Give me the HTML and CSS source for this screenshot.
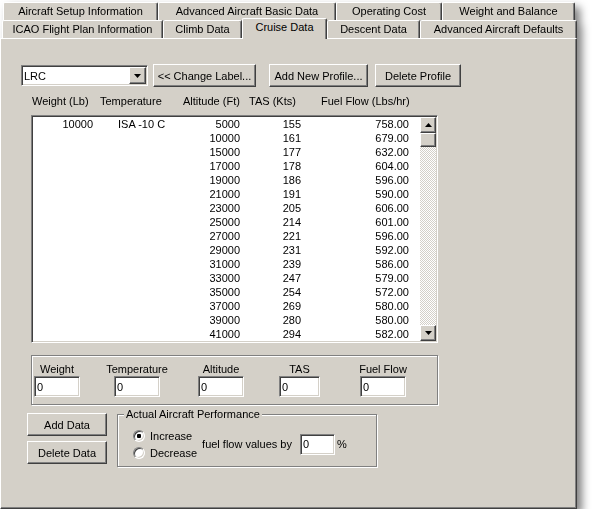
FILE: index.html
```html
<!DOCTYPE html>
<html>
<head>
	<title>
		Cruise Data
	</title>

	<link rel="stylesheet" href="styles.css">
</head>
<body>
	<div class="dialog">
		<div class="tabs">
			<div class="tab-row back">
				<div class="tab t-setup">Aircraft Setup Information</div>
				<div class="tab t-basic">Advanced Aircraft Basic Data</div>
				<div class="tab t-cost">Operating Cost</div>
				<div class="tab t-weight">Weight and Balance</div>
			</div>
			<div class="tab-row front">
				<div class="tab t-icao">ICAO Flight Plan Information</div>
				<div class="tab t-climb">Climb Data</div>
				<div class="tab t-cruise active">Cruise Data</div>
				<div class="tab t-descent">Descent Data</div>
				<div class="tab t-defaults">Advanced Aircraft Defaults</div>
			</div>
		</div>

		<div class="panel">
			<div class="toolbar">
				<div class="combo">
					<span class="combo-text">LRC</span>
					<span class="combo-btn raised">
						<svg width="7" height="4" viewBox="0 0 7 4"><polygon points="0,0 7,0 3.5,4" fill="#000"/></svg>
					</span>
				</div>
				<button class="btn btn-label">&lt;&lt; Change Label...</button>
				<button class="btn btn-add">Add New Profile...</button>
				<button class="btn btn-delete">Delete Profile</button>
			</div>

			<div class="list-head">
				<span>Weight (Lb)</span>
				<span>Temperature</span>
				<span>Altitude (Ft)</span>
				<span>TAS (Kts)</span>
				<span>Fuel Flow (Lbs/hr)</span>
			</div>

			<div class="listbox">
				<div class="rows">
					<div class="row"><span class="c-weight">10000</span><span class="c-temp">ISA -10 C</span><span class="c-alt">5000</span><span class="c-tas">155</span><span class="c-fuel">758.00</span></div>
					<div class="row"><span class="c-weight"></span><span class="c-temp"></span><span class="c-alt">10000</span><span class="c-tas">161</span><span class="c-fuel">679.00</span></div>
					<div class="row"><span class="c-weight"></span><span class="c-temp"></span><span class="c-alt">15000</span><span class="c-tas">177</span><span class="c-fuel">632.00</span></div>
					<div class="row"><span class="c-weight"></span><span class="c-temp"></span><span class="c-alt">17000</span><span class="c-tas">178</span><span class="c-fuel">604.00</span></div>
					<div class="row"><span class="c-weight"></span><span class="c-temp"></span><span class="c-alt">19000</span><span class="c-tas">186</span><span class="c-fuel">596.00</span></div>
					<div class="row"><span class="c-weight"></span><span class="c-temp"></span><span class="c-alt">21000</span><span class="c-tas">191</span><span class="c-fuel">590.00</span></div>
					<div class="row"><span class="c-weight"></span><span class="c-temp"></span><span class="c-alt">23000</span><span class="c-tas">205</span><span class="c-fuel">606.00</span></div>
					<div class="row"><span class="c-weight"></span><span class="c-temp"></span><span class="c-alt">25000</span><span class="c-tas">214</span><span class="c-fuel">601.00</span></div>
					<div class="row"><span class="c-weight"></span><span class="c-temp"></span><span class="c-alt">27000</span><span class="c-tas">221</span><span class="c-fuel">596.00</span></div>
					<div class="row"><span class="c-weight"></span><span class="c-temp"></span><span class="c-alt">29000</span><span class="c-tas">231</span><span class="c-fuel">592.00</span></div>
					<div class="row"><span class="c-weight"></span><span class="c-temp"></span><span class="c-alt">31000</span><span class="c-tas">239</span><span class="c-fuel">586.00</span></div>
					<div class="row"><span class="c-weight"></span><span class="c-temp"></span><span class="c-alt">33000</span><span class="c-tas">247</span><span class="c-fuel">579.00</span></div>
					<div class="row"><span class="c-weight"></span><span class="c-temp"></span><span class="c-alt">35000</span><span class="c-tas">254</span><span class="c-fuel">572.00</span></div>
					<div class="row"><span class="c-weight"></span><span class="c-temp"></span><span class="c-alt">37000</span><span class="c-tas">269</span><span class="c-fuel">580.00</span></div>
					<div class="row"><span class="c-weight"></span><span class="c-temp"></span><span class="c-alt">39000</span><span class="c-tas">280</span><span class="c-fuel">580.00</span></div>
					<div class="row"><span class="c-weight"></span><span class="c-temp"></span><span class="c-alt">41000</span><span class="c-tas">294</span><span class="c-fuel">582.00</span></div>
				</div>
				<div class="scrollbar">
					<span class="sb-btn raised">
						<svg width="7" height="4" viewBox="0 0 7 4"><polygon points="0,4 7,4 3.5,0" fill="#000"/></svg>
					</span>
					<span class="sb-thumb raised"></span>
					<span class="sb-track"></span>
					<span class="sb-btn raised">
						<svg width="7" height="4" viewBox="0 0 7 4"><polygon points="0,0 7,0 3.5,4" fill="#000"/></svg>
					</span>
				</div>
			</div>

			<div class="entry">
				<div class="field">
					<label>Weight</label>
					<input type="text" class="field-input" value="0">
				</div>
				<div class="field">
					<label>Temperature</label>
					<input type="text" class="field-input" value="0">
				</div>
				<div class="field">
					<label>Altitude</label>
					<input type="text" class="field-input" value="0">
				</div>
				<div class="field narrow">
					<label>TAS</label>
					<input type="text" class="field-input" value="0">
				</div>
				<div class="field">
					<label>Fuel Flow</label>
					<input type="text" class="field-input" value="0">
				</div>
			</div>

			<div class="bottom">
				<div class="side-buttons">
					<button class="btn btn-data">Add Data</button>
					<button class="btn btn-data">Delete Data</button>
				</div>
				<fieldset class="perf">
					<legend>Actual Aircraft Performance</legend>
					<div class="perf-body">
						<div class="radios">
							<div class="radio"><span class="radio-dot checked"></span>Increase</div>
							<div class="radio"><span class="radio-dot"></span>Decrease</div>
						</div>
						<span class="perf-text">fuel flow values by</span>
						<input type="text" class="field-input pct-input" value="0">
						<span class="pct">%</span>
					</div>
				</fieldset>
			</div>
		</div>
	</div>
</body>
</html>
```

FILE: styles.css
```css
body {
	margin: 0;
	background: #fff;
	font-family: "Liberation Sans", Arial, sans-serif;
	font-size: 11px;
	color: #000;
}

.dialog {
	width: 577px;
	filter: drop-shadow(5px 5px 4px rgba(0, 0, 0, 0.5));
}

/* tab strip */
.tabs {
	height: 38px;
	padding-top: 2px;
	box-sizing: border-box;
}

.tab-row {
	display: flex;
	align-items: flex-end;
	height: 18px;
}

.tab-row.back {
	margin-left: 3px;
}

.tab-row.front {
	margin-left: 2px;
}

.tab {
	box-sizing: border-box;
	height: 18px;
	padding-top: 2px;
	line-height: 13px;
	text-align: center;
	white-space: nowrap;
	background: #d4d0c8;
	border-top: 1px solid #fff;
	border-left: 1px solid #fff;
	border-right: 1px solid #404040;
	border-radius: 2px 2px 0 0;
	box-shadow: inset -1px 0 #808080;
}

.tab.active {
	height: 21px;
	padding-top: 2px;
	margin-bottom: -1px;
	position: relative;
	z-index: 1;
}

.t-setup { width: 155px; }
.t-basic { width: 178px; }
.t-cost { width: 106px; }
.t-weight { width: 133px; }
.t-icao { width: 161px; }
.t-climb { width: 79px; }
.t-cruise { width: 85px; }
.t-descent { width: 93px; }
.t-defaults { width: 157px; }

/* main page */
.panel {
	box-sizing: border-box;
	height: 471px;
	padding: 25px 0 0 20px;
	background: #d4d0c8;
	border-top: 1px solid #fff;
	border-left: 1px solid #fff;
	border-right: 1px solid #404040;
	border-bottom: 1px solid #404040;
	box-shadow: inset -1px -1px #808080;
}

.raised {
	box-sizing: border-box;
	background: #d4d0c8;
	border: 1px solid;
	border-color: #fff #404040 #404040 #fff;
	box-shadow: inset -1px -1px #808080;
}

.btn {
	box-sizing: border-box;
	height: 23px;
	padding: 0;
	font: inherit;
	color: #000;
	background: #d4d0c8;
	border: 1px solid;
	border-color: #fff #404040 #404040 #fff;
	box-shadow: inset -1px -1px #808080;
}

.toolbar {
	display: flex;
	align-items: center;
	height: 23px;
}

.combo {
	box-sizing: border-box;
	width: 127px;
	height: 21px;
	padding: 1px;
	display: flex;
	align-items: center;
	background: #fff;
	border: 1px solid;
	border-color: #808080 #fff #fff #808080;
	box-shadow: inset 1px 1px #404040, inset -1px -1px #d4d0c8;
}

.combo-text {
	flex: 1;
	padding-left: 1px;
}

.combo-btn {
	width: 17px;
	height: 17px;
	display: flex;
	align-items: center;
	justify-content: center;
}

.btn-label {
	width: 103px;
	margin-left: 5px;
}

.btn-add {
	width: 99px;
	margin-left: 13px;
}

.btn-delete {
	width: 86px;
	margin-left: 7px;
}

.list-head {
	display: grid;
	grid-template-columns: 68px 83px 66px 72px auto;
	margin: 8px 0 0 11px;
	line-height: 13px;
	white-space: nowrap;
}

/* data list */
.listbox {
	box-sizing: border-box;
	width: 407px;
	height: 228px;
	margin: 7px 0 0 10px;
	padding: 1px;
	display: flex;
	background: #fff;
	border: 1px solid;
	border-color: #808080 #fff #fff #808080;
	box-shadow: inset 1px 1px #404040, inset -1px -1px #d4d0c8;
}

.rows {
	flex: 1;
}

.row {
	display: grid;
	grid-template-columns: 60px 100px 47px 61px 108px;
	height: 14px;
	line-height: 14px;
	white-space: nowrap;
}

.c-weight, .c-alt, .c-tas, .c-fuel {
	text-align: right;
}

.c-temp {
	padding-left: 25px;
}

.scrollbar {
	width: 16px;
	display: flex;
	flex-direction: column;
	background: repeating-conic-gradient(#d4d0c8 0 25%, #fff 0 50%) 0 0 / 2px 2px;
}

.sb-btn {
	height: 16px;
	display: flex;
	align-items: center;
	justify-content: center;
}

.sb-thumb {
	height: 14px;
}

.sb-track {
	flex: 1;
}

/* entry boxes */
.entry {
	box-sizing: border-box;
	width: 407px;
	height: 50px;
	margin: 12px 0 0 10px;
	padding: 7px 0 0 2px;
	display: grid;
	grid-template-columns: 80px 84px 81px 81px 47px;
	border: 1px solid #808080;
	box-shadow: inset 1px 1px #fff, 1px 1px #fff;
}

.field {
	width: 46px;
	display: flex;
	flex-direction: column;
	align-items: center;
}

.field.narrow {
	width: 41px;
}

.field label {
	line-height: 13px;
	white-space: nowrap;
}

.field-input {
	box-sizing: border-box;
	width: 100%;
	height: 21px;
	margin: 0;
	padding: 0 0 0 2px;
	font: inherit;
	color: #000;
	background: #fff;
	border: 1px solid;
	border-color: #808080 #fff #fff #808080;
	box-shadow: inset 1px 1px #404040, inset -1px -1px #d4d0c8;
	outline: none;
}

.bottom {
	display: flex;
	align-items: flex-start;
	margin: 3px 0 0 6px;
}

.side-buttons {
	display: flex;
	flex-direction: column;
	gap: 5px;
	margin-top: 5px;
}

.btn-data {
	width: 80px;
}

.perf {
	box-sizing: border-box;
	width: 260px;
	margin: 0 0 0 10px;
	padding: 6px 0 5px 6px;
	border: 1px solid #808080;
	box-shadow: inset 1px 1px #fff, 1px 1px #fff;
}

.perf legend {
	padding: 0 2px;
	line-height: 13px;
	background: #d4d0c8;
}

.perf-body {
	display: flex;
	align-items: center;
	margin-left: 9px;
}

.radios {
	display: flex;
	flex-direction: column;
}

.radio {
	display: flex;
	align-items: center;
	height: 17px;
}

.radio-dot {
	box-sizing: border-box;
	width: 12px;
	height: 12px;
	margin-right: 5px;
	border-radius: 50%;
	background: #fff;
	border: 1px solid;
	border-color: #808080 #fff #fff #808080;
	box-shadow: inset 1px 1px #404040, inset -1px -1px #d4d0c8;
}

.radio-dot.checked {
	background: radial-gradient(circle, #000 0 2px, #fff 2.5px);
}

.perf-text {
	margin-left: 5px;
	white-space: nowrap;
}

.pct-input {
	width: 35px;
	margin-left: 8px;
}

.pct {
	margin-left: 2px;
}
```
